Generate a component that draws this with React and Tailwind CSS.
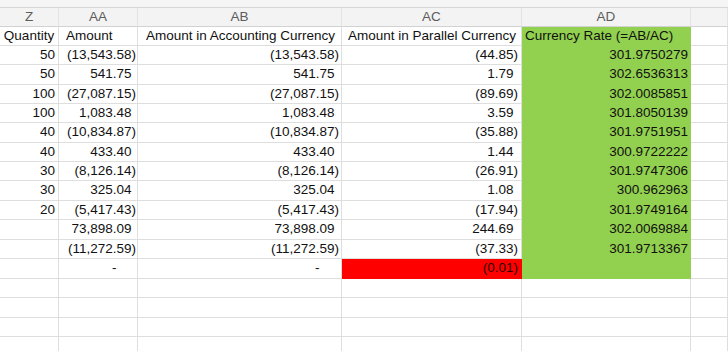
import React from "react";

const FONT = { fontFamily: '"Liberation Sans", Arial, sans-serif' };

const W = ["w-[59px]", "w-[79px]", "w-[204px]", "w-[180px]", "w-[169px]", "flex-1"];

const data = [
  ["50", "(13,543.58)", "(13,543.58)", "(44.85)", "301.9750279"],
  ["50", "541.75", "541.75", "1.79", "302.6536313"],
  ["100", "(27,087.15)", "(27,087.15)", "(89.69)", "302.0085851"],
  ["100", "1,083.48", "1,083.48", "3.59", "301.8050139"],
  ["40", "(10,834.87)", "(10,834.87)", "(35.88)", "301.9751951"],
  ["40", "433.40", "433.40", "1.44", "300.9722222"],
  ["30", "(8,126.14)", "(8,126.14)", "(26.91)", "301.9747306"],
  ["30", "325.04", "325.04", "1.08", "300.962963"],
  ["20", "(5,417.43)", "(5,417.43)", "(17.94)", "301.9749164"],
  ["", "73,898.09", "73,898.09", "244.69", "302.0069884"],
  ["", "(11,272.59)", "(11,272.59)", "(37.33)", "301.9713367"],
];

const dataH = ["h-[19px]", "h-[20px]", "h-[19px]", "h-[19px]", "h-[20px]", "h-[19px]", "h-[19px]", "h-[20px]", "h-[19px]", "h-[20px]", "h-[19px]"];
const emptyH = ["h-[19px]", "h-[20px]", "h-[19px]", "h-[15px]"];

function Acc({ v }) {
  if (!v) return null;
  if (v.startsWith("(")) return <span>{v}</span>;
  return (
    <span>
      {v}
      <span className="invisible">)</span>
    </span>
  );
}

function Dash() {
  return (
    <span>
      -<span className="invisible">00)</span>
    </span>
  );
}

const cell = "box-border h-full border-r border-b border-[#dedede] flex items-center whitespace-nowrap overflow-hidden";
const green = "box-border h-full border-r border-b border-[#92d050] bg-[#92d050] flex items-center justify-end whitespace-nowrap overflow-hidden";

export default function App() {
  return (
    <div className="w-[728px] h-[351px] overflow-hidden bg-white text-[13.5px] text-[#111]" style={FONT}>
      <div className="h-[8px] bg-[#f5f5f5] border-b border-[#d6d6d6] box-border" />
      <div className="flex h-[19px] bg-[#f3f3f3] text-[#5c5c5c]">
        {["Z", "AA", "AB", "AC", "AD", ""].map((l, i) => (
          <div key={i} className={`${W[i]} box-border h-full border-r border-b border-r-[#e2e2e2] border-b-[#d2d2d2] flex items-center justify-center`}>
            {l}
          </div>
        ))}
      </div>
      <div className="flex h-[19px]">
        <div className={`${W[0]} ${cell} justify-center`}>Quantity</div>
        <div className={`${W[1]} ${cell} pl-[7px]`}>Amount</div>
        <div className={`${W[2]} ${cell} pl-[8px]`}>Amount in Accounting Currency</div>
        <div className={`${W[3]} ${cell} pl-[6px]`}>Amount in Parallel Currency</div>
        <div className={`${W[4]} ${green} justify-start pl-[3px]`}>Currency Rate (=AB/AC)</div>
        <div className={`${W[5]} ${cell}`} />
      </div>
      {data.map((r, i) => (
        <div key={i} className={`flex ${dataH[i]}`}>
          <div className={`${W[0]} ${cell} justify-end pr-[3px]`}>{r[0]}</div>
          <div className={`${W[1]} ${cell} justify-end pr-[1px]`}>
            <Acc v={r[1]} />
          </div>
          <div className={`${W[2]} ${cell} justify-end pr-[2px]`}>
            <Acc v={r[2]} />
          </div>
          <div className={`${W[3]} ${cell} justify-end pr-[3px]`}>
            <Acc v={r[3]} />
          </div>
          <div className={`${W[4]} ${green} pr-[2px]`}>{r[4]}</div>
          <div className={`${W[5]} ${cell}`} />
        </div>
      ))}
      <div className="flex h-[20px]">
        <div className={`${W[0]} ${cell}`} />
        <div className={`${W[1]} ${cell} justify-end pr-[1px]`}>
          <Dash />
        </div>
        <div className={`${W[2]} ${cell} justify-end pr-[2px]`}>
          <Dash />
        </div>
        <div className={`${W[3]} box-border h-full border-r border-b border-[#ff0000] bg-[#ff0000] flex items-center justify-end pr-[3px] text-[#2a0000]`}>
          (0.01)
        </div>
        <div className={`${W[4]} ${green}`} />
        <div className={`${W[5]} ${cell}`} />
      </div>
      {emptyH.map((h, i) => (
        <div key={i} className={`flex ${h}`}>
          {W.map((w, j) => (
            <div key={j} className={`${w} ${cell}`} />
          ))}
        </div>
      ))}
    </div>
  );
}
